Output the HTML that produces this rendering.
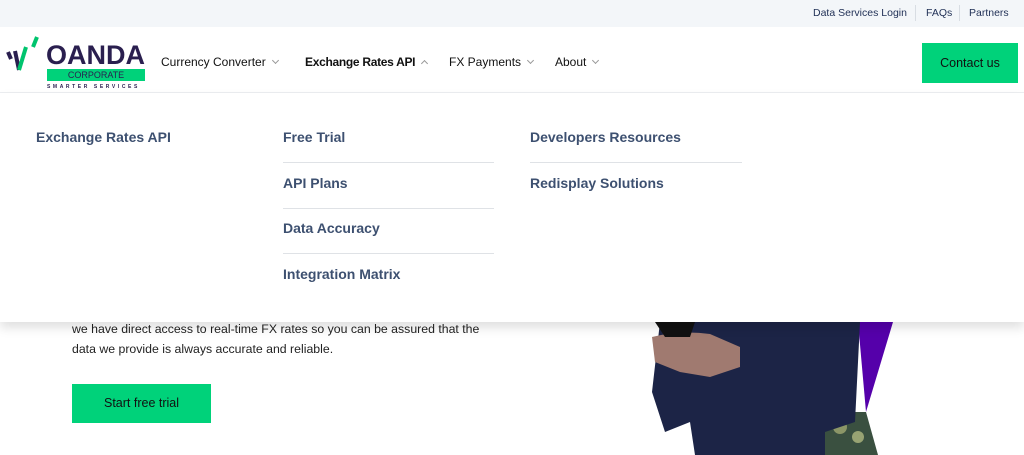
<!DOCTYPE html>
<html><head><style>
*{margin:0;padding:0;box-sizing:border-box}
body{width:1024px;height:455px;overflow:hidden;background:#fff;font-family:"Liberation Sans",sans-serif;position:relative}
.top{position:absolute;left:0;top:0;width:1024px;height:27px;background:#f3f6f9;font-size:10.5px;color:#1f2f55}
.top span{position:absolute;top:7px}
.sep{position:absolute;top:5px;width:1px;height:16px;background:#d8dde3}
.nav{position:absolute;top:27px;left:0;width:1024px;height:66px;background:#fff;border-bottom:1px solid #eceef1}
.ni{position:absolute;font-size:12px;color:#111;}
.chev{display:inline-block;width:5px;height:5px;border-right:1px solid #999;border-bottom:1px solid #999;transform:rotate(45deg);margin-left:7px;position:relative;top:-3px}
.chev.up{transform:rotate(-135deg);top:0}
.btn{position:absolute;background:#00d27a;color:#111;font-size:12.5px;text-align:center}
.drop{position:absolute;top:93px;left:0;width:1024px;height:229px;background:#fff;box-shadow:0 6px 10px rgba(0,0,0,.12);z-index:2}
.m{position:absolute;font-size:14px;font-weight:bold;color:#3d5070}
.ln{position:absolute;height:1px;background:#dfe2e6}
.body{position:absolute;font-size:12.3px;color:#222;line-height:20px}
</style></head><body>
<div class="top">
<span style="left:813px">Data Services Login</span>
<div class="sep" style="left:915px"></div>
<span style="left:926px">FAQs</span>
<div class="sep" style="left:959px"></div>
<span style="left:969px">Partners</span>
</div>
<div class="nav">
<svg style="position:absolute;left:5px;top:9px" width="36" height="36" viewBox="0 0 36 36">
<path d="M3 16 L6 23" stroke="#2a1f4f" stroke-width="4"/>
<path d="M10 15 L14 34" stroke="#2a1f4f" stroke-width="4"/>
<path d="M14 34 L21 11" stroke="#00c46e" stroke-width="4"/>
<path d="M28 11 L32 1" stroke="#00c46e" stroke-width="4"/>
</svg>
<div style="position:absolute;left:46px;top:15px;font-size:27px;font-weight:bold;color:#2a1f4f;line-height:27px;transform:scaleX(1.0);transform-origin:left">OANDA</div>
<div style="position:absolute;left:47px;top:42px;width:98px;height:12px;background:#00d27a;font-size:9px;color:#2a1f4f;text-align:center;line-height:12px">CORPORATE</div>
<div style="position:absolute;left:47px;top:57px;width:98px;font-size:5px;color:#2a1f4f;letter-spacing:2.6px;font-weight:bold">SMARTER SERVICES</div>
</div>
<div class="ni" style="left:161px;top:55px">Currency Converter<span class="chev"></span></div>
<div class="ni" style="left:305px;top:55px;font-weight:bold;letter-spacing:-0.3px">Exchange Rates API<span class="chev up"></span></div>
<div class="ni" style="left:449px;top:55px">FX Payments<span class="chev"></span></div>
<div class="ni" style="left:555px;top:55px">About<span class="chev"></span></div>
<div class="btn" style="left:922px;top:43px;width:96px;height:40px;line-height:40px">Contact us</div>
<div class="drop">
<div class="m" style="left:36px;top:36px">Exchange Rates API</div>
<div class="m" style="left:283px;top:36px">Free Trial</div>
<div class="ln" style="left:283px;top:69px;width:211px"></div>
<div class="m" style="left:283px;top:82px">API Plans</div>
<div class="ln" style="left:283px;top:115px;width:211px"></div>
<div class="m" style="left:283px;top:127px">Data Accuracy</div>
<div class="ln" style="left:283px;top:160px;width:211px"></div>
<div class="m" style="left:283px;top:173px">Integration Matrix</div>
<div class="m" style="left:530px;top:36px">Developers Resources</div>
<div class="ln" style="left:530px;top:69px;width:212px"></div>
<div class="m" style="left:530px;top:82px">Redisplay Solutions</div>
</div>
<div class="body" style="left:72px;top:319px">we have direct access to real-time FX rates so you can be assured that the<br>data we provide is always accurate and reliable.</div>
<div class="btn" style="left:72px;top:384px;width:139px;height:39px;line-height:39px">Start free trial</div>
<svg style="position:absolute;left:640px;top:322px" width="260" height="133">
<polygon points="218,0 253,0 226,90" fill="#5500aa"/>
<polygon points="180,90 226,90 238,133 180,133" fill="#3a5040"/>
<circle cx="200" cy="105" r="7" fill="#a0a870" opacity=".8"/>
<circle cx="218" cy="115" r="6" fill="#b0b880" opacity=".8"/>
<path d="M20 0 L220 0 L215 100 L185 110 L185 133 L55 133 L50 100 L25 110 L12 70 Z" fill="#1c2446"/>
<path d="M12 15 Q40 8 70 12 L100 25 L100 45 L70 55 L40 50 L15 40 Z" fill="#a07a70"/>
<path d="M15 0 L55 0 L50 15 L25 15 Z" fill="#111"/>
</svg>
</body></html>
